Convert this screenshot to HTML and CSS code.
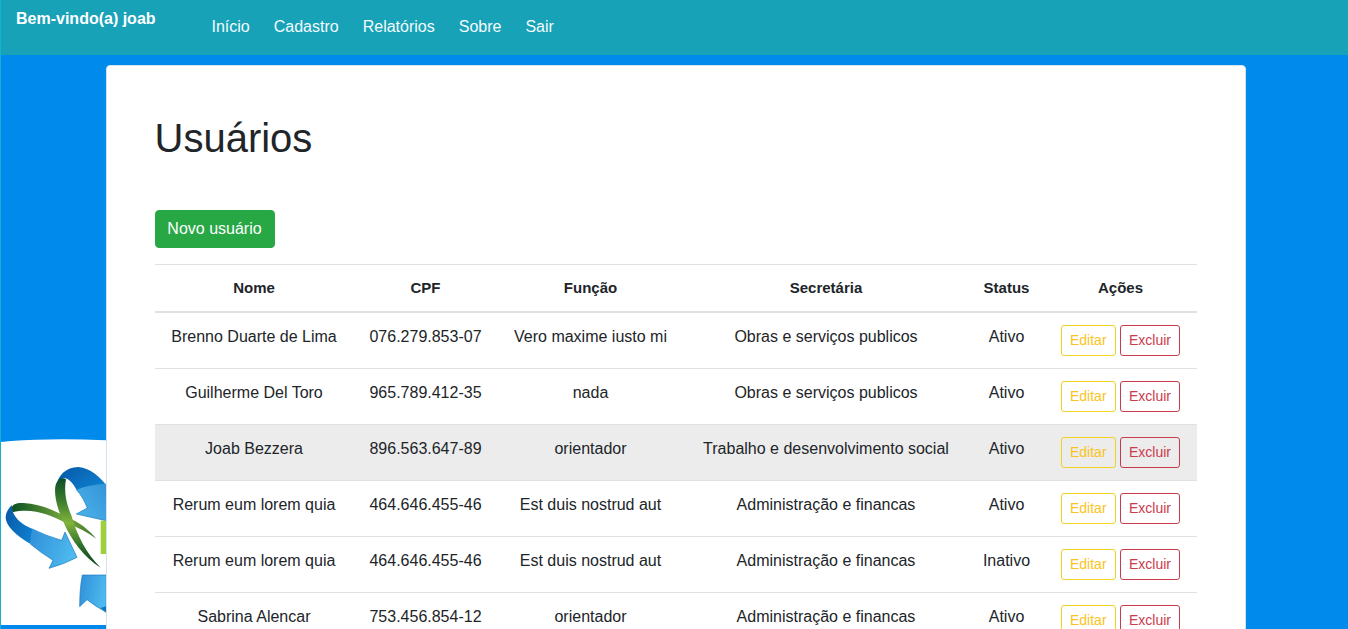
FILE: index.html
```html
<!DOCTYPE html>
<html lang="pt-BR">
<head>
<meta charset="utf-8">
<title>Usuários</title>
<link rel="stylesheet" href="styles.css">
</head>
<body>
<svg class="backdrop" viewBox="0 0 318 597" aria-hidden="true">
  <defs>
    <linearGradient id="dark" x1="0" y1="0" x2="1" y2="0.6"><stop offset="0" stop-color="#0757a6"/><stop offset="1" stop-color="#0d7dcc"/></linearGradient>
    <linearGradient id="light" x1="0" y1="0" x2="1" y2="0.3"><stop offset="0" stop-color="#2f8ed8"/><stop offset="1" stop-color="#4db9ee"/></linearGradient>
    <linearGradient id="light-up" x1="1" y1="0" x2="0" y2="1"><stop offset="0" stop-color="#3593d9"/><stop offset="1" stop-color="#4db5ea"/></linearGradient>
    <linearGradient id="stem" x1="0" y1="0" x2="0" y2="1"><stop offset="0" stop-color="#0b4d24"/><stop offset=".25" stop-color="#3b7b2d"/><stop offset=".5" stop-color="#82b33c"/><stop offset=".75" stop-color="#2f702c"/><stop offset="1" stop-color="#0a4120"/></linearGradient>
    <linearGradient id="branch" x1="0" y1="0" x2="1" y2="0"><stop offset="0" stop-color="#0b5021"/><stop offset=".65" stop-color="#7aab3c"/><stop offset="1" stop-color="#3c6e2b"/></linearGradient>
  </defs>
  <path fill="#fff" d="M3 36L33 33Q160 24 318 31V585H3Z"/>
  <path fill="url(#branch)" d="M34 236C37 222 50 218 70 219C115 221 163 240 198 261C238 275 264 298 289 326C263 307 235 292 203 282C150 253 95 233 38 247Z"/>
  <path fill="url(#dark)" d="M167 174C172 137 198 111 235 111C272 114 303 144 318 165V180L230 180C220 161 208 148 196 145C183 144 172 157 167 174Z"/>
  <path fill="url(#stem)" d="M178 147Q187 142 198 148C191 184 199 222 214 256C230 315 260 372 302 413C252 381 214 331 190 275C169 232 159 181 169 160Z"/>
  <path fill="url(#light-up)" d="M229 179Q265 164 318 161V272L229 252L262 234C253 212 244 195 229 179Z"/>
  <path fill="none" stroke="#167ac0" stroke-width="2" d="M229 179C244 195 253 212 262 234L229 252L318 272"/>
  <path fill="url(#dark)" d="M36 225C33 254 58 281 98 297L92 342C46 316 18 286 17 264C17 248 25 235 36 225Z"/>
  <path fill="url(#light)" d="M97 297Q136 317 185 331L195 306L231 382Q194 402 147 415L159 391Q121 367 91 342Q90 317 97 297Z"/>
  <path fill="none" stroke="#167ac0" stroke-width="2" d="M97 297Q136 317 185 331L195 306L231 382Q194 402 147 415L159 391Q121 367 91 342"/>
  <path fill="#9fd03b" d="M302 272H318V372H302Z"/>
  <path fill="url(#light)" stroke="#167ac0" stroke-width="2" d="M247 435H319V547Q286 529 261 509L239 530Q239 475 247 435Z"/>
  <path fill="#1474b8" d="M302 534L318 529V547Z"/>
</svg>
<header class="topbar">
  <strong class="welcome">Bem-vindo(a) joab</strong>
  <nav class="nav"><a>Início</a><a>Cadastro</a><a>Relatórios</a><a>Sobre</a><a>Sair</a></nav>
</header>
<main class="card">
  <h1>Usuários</h1>
  <button class="btn btn-new">Novo usuário</button>
  <table class="users">
    <colgroup><col class="c-name"><col class="c-cpf"><col class="c-role"><col class="c-dept"><col class="c-status"><col class="c-actions"></colgroup>
    <thead><tr><th>Nome</th><th>CPF</th><th>Função</th><th>Secretária</th><th>Status</th><th>Ações</th></tr></thead>
    <tbody>
      <tr><td>Brenno Duarte de Lima</td><td>076.279.853-07</td><td>Vero maxime iusto mi</td><td>Obras e serviços publicos</td><td>Ativo</td><td><div class="actions"><button class="btn edit">Editar</button><button class="btn delete">Excluir</button></div></td></tr>
      <tr><td>Guilherme Del Toro</td><td>965.789.412-35</td><td>nada</td><td>Obras e serviços publicos</td><td>Ativo</td><td><div class="actions"><button class="btn edit">Editar</button><button class="btn delete">Excluir</button></div></td></tr>
      <tr class="active"><td>Joab Bezzera</td><td>896.563.647-89</td><td>orientador</td><td>Trabalho e desenvolvimento social</td><td>Ativo</td><td><div class="actions"><button class="btn edit">Editar</button><button class="btn delete">Excluir</button></div></td></tr>
      <tr><td>Rerum eum lorem quia</td><td>464.646.455-46</td><td>Est duis nostrud aut</td><td>Administração e financas</td><td>Ativo</td><td><div class="actions"><button class="btn edit">Editar</button><button class="btn delete">Excluir</button></div></td></tr>
      <tr><td>Rerum eum lorem quia</td><td>464.646.455-46</td><td>Est duis nostrud aut</td><td>Administração e financas</td><td>Inativo</td><td><div class="actions"><button class="btn edit">Editar</button><button class="btn delete">Excluir</button></div></td></tr>
      <tr><td>Sabrina Alencar</td><td>753.456.854-12</td><td>orientador</td><td>Administração e financas</td><td>Ativo</td><td><div class="actions"><button class="btn edit">Editar</button><button class="btn delete">Excluir</button></div></td></tr>
    </tbody>
  </table>
</main>
</body>
</html>
```
FILE: styles.css
```css
* { box-sizing: border-box; }
html { height: 100%; overflow: hidden; background: #008aeb; }
body {
  margin: 0;
  height: 100%;
  overflow: hidden;
  border-left: 1px solid #13b1d2;
  color: #212529;
  font: 16px/24px "Liberation Sans", Arial, sans-serif;
}
.backdrop {
  position: absolute;
  left: 0;
  top: 430px;
  width: 106px;
  height: 199px;
  clip-path: inset(0 0 0 1px);
}
.topbar {
  display: flex;
  align-items: flex-start;
  height: 55px;
  padding: 7px 15px;
  background: #17a2b8;
  color: #fff;
}
.welcome { width: 195.5px; line-height: 24px; }
.nav { display: flex; gap: 24px; padding-top: 8px; color: #f3fbfc; }
.card {
  position: relative;
  width: 1140px;
  margin: 10px 0 0 105px;
  padding: 48px;
  border: 1px solid #d5e3ec;
  border-radius: 4px;
  background: #fff;
}
h1 { margin: 0 0 48px -0.5px; font-size: 40px; font-weight: 400; line-height: 48px; }
.btn {
  display: block;
  border: 1px solid;
  background: transparent;
  font-family: inherit;
}
.btn-new {
  width: 120px;
  height: 38px;
  margin-bottom: 16px;
  padding: 0 1px 0 0;
  border-color: #28a745;
  border-radius: 4px;
  background: #28a745;
  color: #fff;
  font-size: 16px;
  line-height: 24px;
}
.users {
  width: 1042px;
  table-layout: fixed;
  border-collapse: separate;
  border-spacing: 0;
  text-align: center;
}
.c-name { width: 198px; }
.c-cpf { width: 145px; }
.c-role { width: 185px; }
.c-dept { width: 286px; }
.c-status { width: 75px; }
.c-actions { width: 153px; }
th {
  height: 49px;
  padding: 0;
  border-top: 1px solid #dee2e6;
  border-bottom: 2px solid #dee2e6;
  font-size: 15px;
}
td { height: 56px; padding: 12px 0; vertical-align: top; white-space: nowrap; }
tr + tr td { border-top: 1px solid #dee2e6; }
tbody tr:first-child td { height: 55px; }
.active td { background: #ececec; }
.actions { display: flex; justify-content: center; gap: 4px; }
.edit, .delete {
  height: 31px;
  padding: 4px 8px;
  border-radius: 3px;
  font-size: 14px;
  line-height: 21px;
}
.edit { width: 55px; padding-right: 9px; border-color: #f2d21c; color: #fac41c; }
.delete { width: 60px; border-color: #c93b4b; color: #cb3b4b; }
```
